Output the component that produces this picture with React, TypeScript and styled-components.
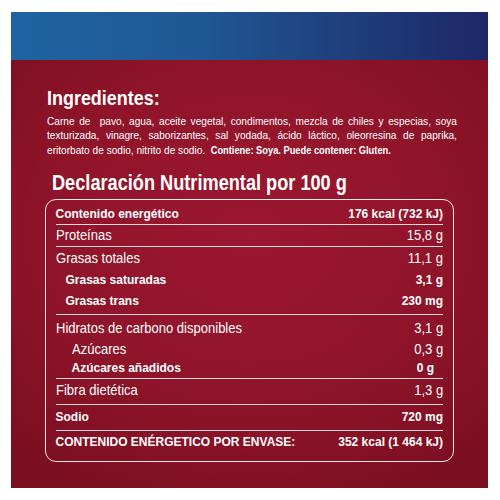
import React from "react";
import styled, { createGlobalStyle } from "styled-components";

const GlobalStyle = createGlobalStyle`
  html, body { margin: 0; padding: 0; background: #ffffff; overflow: hidden; }
  body { font-family: "Liberation Sans", Arial, sans-serif; color: #ffffff; }
  * { box-sizing: border-box; }
`;

const Page = styled.div`
  width: 500px;
  height: 500px;
  padding: 12px 12px 12px 11px;
  background: #ffffff;
  overflow: hidden;
`;

const Panel = styled.div`
  width: 477px;
  height: 476px;
  display: flex;
  flex-direction: column;
`;

const Band = styled.div`
  height: 48px;
  background: linear-gradient(90deg, #1f64a2 0%, #1f5794 40%, #1f3f7c 70%, #1e2766 100%);
`;

const RedArea = styled.div`
  flex: 1;
  padding-top: 25px;
  background: radial-gradient(ellipse 75% 70% at 50% 40%, #9c1731 0%, #8f1429 55%, #7b0e21 100%);
`;

const Ingredients = styled.section`
  padding: 0 31px 0 36px;
`;

const Heading = styled.h2`
  margin: 0;
  font-weight: 700;
  font-size: 20.5px;
  line-height: 26px;
  white-space: nowrap;
  transform: scaleX(0.875);
  transform-origin: 0 50%;
`;

const Para = styled.div`
  margin-top: 2.5px;
  width: 445.6px;
  font-size: 11px;
  line-height: 14.5px;
  transform: scaleX(0.92);
  transform-origin: 0 50%;
`;

const ParaLine = styled.div<{ $justify?: boolean }>`
  text-align: ${(p) => (p.$justify ? "justify" : "left")};
  text-align-last: ${(p) => (p.$justify ? "justify" : "left")};
  white-space: ${(p) => (p.$justify ? "normal" : "nowrap")};
`;

const Strong = styled.span`
  font-weight: 700;
  font-size: 10.1px;
`;

const Nutrition = styled.section`
  margin: 12.4px 0 0 34px;
  width: 409px;
`;

const Title = styled.h2`
  margin: 0 0 0 7px;
  font-weight: 700;
  font-size: 22px;
  line-height: 26px;
  white-space: nowrap;
  transform: scaleX(0.826);
  transform-origin: 0 50%;
`;

const Box = styled.div`
  margin-top: 2.6px;
  border: 1.5px solid rgba(255, 255, 255, 0.9);
  border-radius: 11px;
  padding: 4.5px 10px 7.5px 9.5px;
`;

const Group = styled.div<{ $pt?: number; $pb?: number; $last?: boolean }>`
  padding-top: ${(p) => p.$pt ?? 0}px;
  padding-bottom: ${(p) => p.$pb ?? 0}px;
  border-bottom: ${(p) => (p.$last ? "none" : "1px solid rgba(255, 240, 243, 0.9)")};
`;

const Row = styled.div<{ $h: number; $bold?: boolean; $indent?: number; $rpad?: number }>`
  display: flex;
  justify-content: space-between;
  height: ${(p) => p.$h}px;
  line-height: ${(p) => p.$h}px;
  font-size: ${(p) => (p.$bold ? 12 : 14)}px;
  font-weight: ${(p) => (p.$bold ? 700 : 400)};
  padding-left: ${(p) => p.$indent ?? 0}px;
  padding-right: ${(p) => p.$rpad ?? 0}px;
  white-space: nowrap;
`;

const Cell = styled.span<{ $end?: boolean; $narrow?: boolean }>`
  display: inline-block;
  transform: ${(p) => (p.$narrow ? "scaleX(0.93)" : "none")};
  transform-origin: ${(p) => (p.$end ? "100% 50%" : "0 50%")};
`;

type RowData = { label: string; value: string; h: number; bold?: boolean; indent?: number; rpad?: number };
type GroupData = { pt?: number; pb?: number; rows: RowData[] };

const groups: GroupData[] = [
  { rows: [{ label: "Contenido energético", value: "176 kcal (732 kJ)", h: 20, bold: true }] },
  { rows: [{ label: "Proteínas", value: "15,8 g", h: 21 }] },
  {
    pb: 2,
    rows: [
      { label: "Grasas totales", value: "11,1 g", h: 22 },
      { label: "Grasas saturadas", value: "3,1 g", h: 22, bold: true, indent: 10 },
      { label: "Grasas trans", value: "230 mg", h: 21, bold: true, indent: 10 },
    ],
  },
  {
    pt: 3,
    pb: 1,
    rows: [
      { label: "Hidratos de carbono disponibles", value: "3,1 g", h: 21 },
      { label: "Azúcares", value: "0,3 g", h: 20, indent: 16 },
      { label: "Azúcares añadidos", value: "0 g", h: 18, bold: true, indent: 16, rpad: 9 },
    ],
  },
  { pb: 2, rows: [{ label: "Fibra dietética", value: "1,3 g", h: 23 }] },
  { rows: [{ label: "Sodio", value: "720 mg", h: 25, bold: true }] },
  { rows: [{ label: "CONTENIDO ENÉRGETICO POR ENVASE:", value: "352 kcal (1 464 kJ)", h: 22, bold: true }] },
];

export default function App() {
  return (
    <>
      <GlobalStyle />
      <Page>
        <Panel>
          <Band />
          <RedArea>
            <Ingredients>
              <Heading>Ingredientes:</Heading>
              <Para>
                <ParaLine $justify>
                  Carne de{"\u00a0"} pavo, agua, aceite vegetal, condimentos, mezcla de chiles y especias, soya
                </ParaLine>
                <ParaLine $justify>
                  texturizada, vinagre, saborizantes, sal yodada, ácido láctico, oleorresina de paprika,
                </ParaLine>
                <ParaLine>
                  eritorbato de sodio, nitrito de sodio.{"\u00a0 "}
                  <Strong>Contiene: Soya. Puede contener: Gluten.</Strong>
                </ParaLine>
              </Para>
            </Ingredients>
            <Nutrition>
              <Title>Declaración Nutrimental por 100 g</Title>
              <Box>
                {groups.map((g, gi) => (
                  <Group key={gi} $pt={g.pt} $pb={g.pb} $last={gi === groups.length - 1}>
                    {g.rows.map((r) => (
                      <Row key={r.label} $h={r.h} $bold={r.bold} $indent={r.indent} $rpad={r.rpad}>
                        <Cell $narrow={!r.bold}>{r.label}</Cell>
                        <Cell $narrow={!r.bold} $end>
                          {r.value}
                        </Cell>
                      </Row>
                    ))}
                  </Group>
                ))}
              </Box>
            </Nutrition>
          </RedArea>
        </Panel>
      </Page>
    </>
  );
}
